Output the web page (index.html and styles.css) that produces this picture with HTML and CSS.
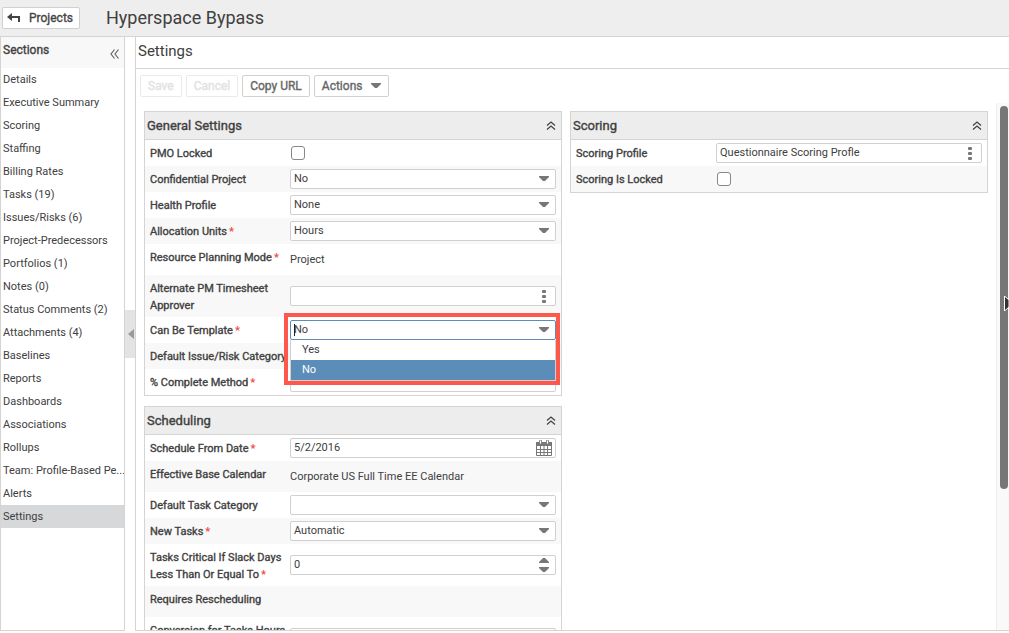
FILE: index.html
```html
<!DOCTYPE html>
<html lang="en">
<head>
<meta charset="utf-8">
<title>Hyperspace Bypass - Settings</title>
<link rel="stylesheet" href="styles.css">
</head>
<body>
<svg class="defs" aria-hidden="true">
  <symbol id="caret" viewBox="0 0 10 6"><path d="M0 0h10v1L6 5H4L0 1z"/></symbol>
  <symbol id="dots" viewBox="0 0 4 13"><rect width="4" height="3" rx="1"/><rect y="5" width="4" height="3" rx="1"/><rect y="10" width="4" height="3" rx="1"/></symbol>
  <symbol id="up2" viewBox="0 0 10 9"><path d="M1 4.500L5 1l4 3.500M1 8.500L5 5l4 3.500" fill="none" stroke="#444" stroke-width="1.300"/></symbol>
</svg>
<header class="topbar">
  <button class="btn back"><svg width="13" height="10" viewBox="0 0 13 10"><path d="M0 4L5 0v3h8v6h-2V5H5v3z" fill="#444"/></svg>Projects</button>
  <h1 class="project">Hyperspace Bypass</h1>
</header>
<div class="body">
  <nav class="sidebar">
    <div class="side-head"><h2 class="side-title">Sections</h2>
      <button class="icon-btn" aria-label="Collapse sections"><svg width="9" height="10" viewBox="0 0 9 10"><path d="M4.500 .5L1 5l3.500 4.500M8.500 .5L5 5l3.500 4.500" fill="none" stroke="#666" stroke-width="1.200"/></svg></button></div>
    <a class="item" href="#">Details</a>
    <a class="item" href="#">Executive Summary</a>
    <a class="item" href="#">Scoring</a>
    <a class="item" href="#">Staffing</a>
    <a class="item" href="#">Billing Rates</a>
    <a class="item" href="#">Tasks (19)</a>
    <a class="item" href="#">Issues/Risks (6)</a>
    <a class="item" href="#">Project-Predecessors</a>
    <a class="item" href="#">Portfolios (1)</a>
    <a class="item" href="#">Notes (0)</a>
    <a class="item" href="#">Status Comments (2)</a>
    <a class="item" href="#">Attachments (4)</a>
    <a class="item" href="#">Baselines</a>
    <a class="item" href="#">Reports</a>
    <a class="item" href="#">Dashboards</a>
    <a class="item" href="#">Associations</a>
    <a class="item" href="#">Rollups</a>
    <a class="item" href="#">Team: Profile-Based Pe...</a>
    <a class="item" href="#">Alerts</a>
    <a class="item current" href="#" aria-current="page">Settings</a>
  </nav>
  <div class="splitter"><button class="handle" aria-label="Collapse sidebar"><svg width="6" height="10" viewBox="0 0 6 10"><path d="M6 0v10L0 5z" fill="#999"/></svg></button></div>
  <main class="main">
    <h2 class="title">Settings</h2>
    <div class="toolbar">
      <button class="btn" disabled>Save</button>
      <button class="btn" disabled>Cancel</button>
      <button class="btn">Copy URL</button>
      <button class="btn">Actions<svg class="btn-caret" width="10" height="6"><use href="#caret"/></svg></button>
    </div>
    <div class="scroll">
      <div class="columns">
        <div class="column">
          <section class="panel">
            <div class="panel-head"><h3 class="panel-title">General Settings</h3><button class="icon-btn" aria-label="Collapse General Settings"><svg width="10" height="9"><use href="#up2"/></svg></button></div>
            <div class="row"><label class="label" for="pmo">PMO Locked</label><div class="field"><input class="check" type="checkbox" id="pmo"></div></div>
            <div class="row"><label class="label" for="conf">Confidential Project</label><div class="field"><select class="box" id="conf"><option>No</option></select><svg class="mark" width="10" height="6"><use href="#caret"/></svg></div></div>
            <div class="row"><label class="label" for="health">Health Profile</label><div class="field"><select class="box" id="health"><option>None</option></select><svg class="mark" width="10" height="6"><use href="#caret"/></svg></div></div>
            <div class="row"><label class="label" for="alloc">Allocation Units<b class="req">*</b></label><div class="field"><select class="box" id="alloc"><option>Hours</option></select><svg class="mark" width="10" height="6"><use href="#caret"/></svg></div></div>
            <div class="row static"><span class="label">Resource Planning Mode<b class="req">*</b></span><div class="field">Project</div></div>
            <div class="row"><label class="label" for="alt">Alternate PM Timesheet Approver</label><div class="field"><input class="box" id="alt" type="text"><svg class="mark" width="10" height="13"><use href="#dots"/></svg></div></div>
            <div class="row"><label class="label" for="tmpl">Can Be Template<b class="req">*</b></label><div class="field">
              <input class="box active" id="tmpl" type="text" role="combobox" aria-expanded="true" aria-controls="tmpl-list" value="No"><span class="text-cursor"></span><svg class="mark" width="10" height="6"><use href="#caret"/></svg>
              <div class="options" id="tmpl-list" role="listbox"><div class="option" role="option">Yes</div><div class="option chosen" role="option" aria-selected="true">No</div></div>
              <div class="callout"></div>
            </div></div>
            <div class="row"><label class="label" for="issue">Default Issue/Risk Category</label><div class="field"><select class="box" id="issue"><option></option></select></div></div>
            <div class="row"><label class="label" for="pct">% Complete Method<b class="req">*</b></label><div class="field"><select class="box" id="pct"><option></option></select></div></div>
          </section>
          <section class="panel">
            <div class="panel-head"><h3 class="panel-title">Scheduling</h3><button class="icon-btn" aria-label="Collapse Scheduling"><svg width="10" height="9"><use href="#up2"/></svg></button></div>
            <div class="row"><label class="label" for="from">Schedule From Date<b class="req">*</b></label><div class="field"><input class="box" id="from" type="text" value="5/2/2016">
              <svg class="mark cal" width="16" height="16" viewBox="0 0 16 16"><path d="M.5 2.500h15v13H.5z" fill="#fff" stroke="#777"/><path d="M0 2h16v4H0z" fill="#777"/><path d="M0 9.500h16M0 12.500h16M4.500 6v10M8 6v10M11.500 6v10" stroke="#777"/><path d="M3.500 0h2v4h-2zM10.500 0h2v4h-2z" fill="#fff" stroke="#777" stroke-width=".8"/></svg></div></div>
            <div class="row static"><span class="label">Effective Base Calendar</span><div class="field">Corporate US Full Time EE Calendar</div></div>
            <div class="row"><label class="label" for="cat">Default Task Category</label><div class="field"><select class="box" id="cat"><option></option></select><svg class="mark" width="10" height="6"><use href="#caret"/></svg></div></div>
            <div class="row"><label class="label" for="newt">New Tasks<b class="req">*</b></label><div class="field"><select class="box" id="newt"><option>Automatic</option></select><svg class="mark" width="10" height="6"><use href="#caret"/></svg></div></div>
            <div class="row"><label class="label" for="slack">Tasks Critical If Slack Days Less Than Or Equal To<b class="req">*</b></label><div class="field"><input class="box" id="slack" type="number" value="0"><svg class="mark" width="10" height="14" viewBox="0 0 10 14"><path d="M4 0h2l4 4v1H0V4zM0 9h10v1l-4 4H4l-4-4z"/></svg></div></div>
            <div class="row static"><span class="label">Requires Rescheduling</span><div class="field"></div></div>
            <div class="row"><label class="label" for="conv">Conversion for Tasks Hours to Days</label><div class="field"><input class="box" id="conv" type="text"></div></div>
          </section>
        </div>
        <div class="column">
          <section class="panel">
            <div class="panel-head"><h3 class="panel-title">Scoring</h3><button class="icon-btn" aria-label="Collapse Scoring"><svg width="10" height="9"><use href="#up2"/></svg></button></div>
            <div class="row"><label class="label" for="prof">Scoring Profile</label><div class="field"><input class="box" id="prof" type="text" value="Questionnaire Scoring Profle"><svg class="mark" width="10" height="13"><use href="#dots"/></svg></div></div>
            <div class="row"><label class="label" for="lock">Scoring Is Locked</label><div class="field"><input class="check" type="checkbox" id="lock"></div></div>
          </section>
        </div>
      </div>
      <div class="track"><div class="thumb"></div></div>
    </div>
    <svg class="pointer" width="5" height="15" viewBox="0 0 5 15"><path d="M.5 0v15L5 11V4z" fill="#333" stroke="#fff"/></svg>
  </main>
</div>
</body>
</html>
```
FILE: styles.css
```css
* { box-sizing: border-box; }
body {
  margin: 0;
  height: 100vh;
  padding-bottom: 2px;
  display: flex;
  flex-direction: column;
  overflow: hidden;
  font-family: Roboto, "Liberation Sans", sans-serif;
  font-size: 11px;
  line-height: 17px;
  color: #404040;
  background: #fff;
}
.defs { display: none; }
h1, h2, h3 { margin: 0; font-weight: 400; }
button, input, select { font: inherit; color: inherit; }
.btn, .label, .side-title, .panel-title { -webkit-text-stroke: 0.35px currentColor; }

.topbar {
  height: 37px;
  flex: none;
  display: flex;
  align-items: center;
  gap: 26px;
  padding-left: 2px;
  background: #eee;
  border-bottom: 1px solid #d4d4d4;
}
.project { font-size: 18px; line-height: 24px; }
.btn {
  height: 22px;
  padding: 0 7px;
  display: flex;
  align-items: center;
  background: #fff;
  border: 1px solid #d0d0d0;
  border-radius: 2px;
  font-size: 12px;
  color: #666;
  white-space: nowrap;
}
.btn:disabled { color: #e2e2e2; border-color: #eaeaea; }
.btn-caret { margin-left: 9px; fill: #777; }
.back { gap: 9px; padding: 0 6px 0 4px; color: #444; }
.icon-btn { display: flex; padding: 0; border: 0; background: none; }

.body { flex: 1; min-height: 0; display: flex; }
.sidebar {
  width: 125px;
  flex: none;
  overflow: hidden;
  border: 1px solid #d4d4d4;
  border-top: 0;
}
.side-head {
  height: 31px;
  display: flex;
  justify-content: space-between;
  padding: 5px 5px 0 2px;
  background: #f8f8f8;
}
.side-title { font-size: 12px; }
.side-head .icon-btn { height: 24px; align-items: center; }
.item {
  display: block;
  padding-left: 2px;
  line-height: 23px;
  color: #404040;
  text-decoration: none;
  white-space: nowrap;
}
.current { background: #d7d8da; }
.splitter { width: 10px; flex: none; display: flex; align-items: center; }
.handle {
  width: 10px;
  height: 48px;
  padding: 0 1px 0 0;
  display: flex;
  align-items: center;
  justify-content: flex-end;
  border: 0;
  background: #e3e3e3;
}

.main {
  position: relative;
  flex: 1;
  min-width: 0;
  display: flex;
  flex-direction: column;
  border: 1px solid #d4d4d4;
  border-width: 0 0 1px 1px;
}
.title {
  height: 32px;
  flex: none;
  padding-left: 2px;
  font-size: 15px;
  line-height: 28px;
  border-bottom: 1px solid #d4d4d4;
}
.toolbar { flex: none; display: flex; gap: 4px; padding: 6px 4px; }
.scroll { flex: 1; min-height: 0; display: flex; overflow: hidden; }
.columns {
  flex: 1;
  min-width: 0;
  display: grid;
  grid-template-columns: 1fr 1fr;
  gap: 8px;
  padding: 8px 8px 0;
}
.column { display: flex; flex-direction: column; gap: 10px; min-width: 0; }
.track {
  width: 13px;
  flex: none;
  padding: 3px 1px 0 3px;
  background: #f9f9f9;
  border-left: 1px solid #eee;
}
.thumb { height: 73%; border-radius: 4px; background: #777; }
.pointer { position: absolute; right: 0; top: 259px; }

.panel { border: 1px solid #d4d4d4; background: #fff; }
.panel-head {
  height: 28px;
  display: flex;
  align-items: center;
  justify-content: space-between;
  padding: 0 5px 0 2px;
  background: #ededed;
  border-bottom: 1px solid #d4d4d4;
}
.panel-title { font-size: 13px; }
.row { min-height: 26px; display: flex; padding: 0 5px; }
.row:nth-child(odd) { background: #f8f8f8; }
.static { min-height: 31px; }
.label {
  width: 140px;
  flex: none;
  padding: 5px 0 3px;
}
.req { margin-left: 2px; color: #f0483c; -webkit-text-stroke: 0; }
.field { position: relative; flex: 1; min-width: 0; display: flex; align-items: center; }
.box {
  width: 100%;
  height: 20px;
  padding: 0 30px 2px 3px;
  appearance: none;
  background: #fff;
  border: 1px solid #d0d0d0;
  border-radius: 2px;
  outline: 0;
}
.box::-webkit-inner-spin-button { appearance: none; }
.active { border-color: #5b8db8; }
.mark {
  position: absolute;
  top: 0;
  bottom: 0;
  right: 7px;
  margin: auto;
  fill: #777;
  pointer-events: none;
}
.cal { right: 4px; }
.check {
  width: 14px;
  height: 14px;
  margin: 0 1px;
  appearance: none;
  background: #fff;
  border: 1px solid #888;
  border-radius: 3px;
}
.text-cursor { position: absolute; left: 4px; top: 7px; width: 1px; height: 12px; background: #222; }
.options {
  position: absolute;
  z-index: 1;
  left: 0;
  right: 0;
  top: 23px;
  background: #fff;
  border: 1px solid #d0d0d0;
  border-top: 0;
}
.option { padding-left: 11px; line-height: 20px; }
.chosen { background: #5b8db8; color: #fff; }
.callout {
  position: absolute;
  z-index: 2;
  left: -6px;
  right: -4px;
  top: -4px;
  height: 72px;
  border: 4px solid #fd584b;
  pointer-events: none;
}
```
